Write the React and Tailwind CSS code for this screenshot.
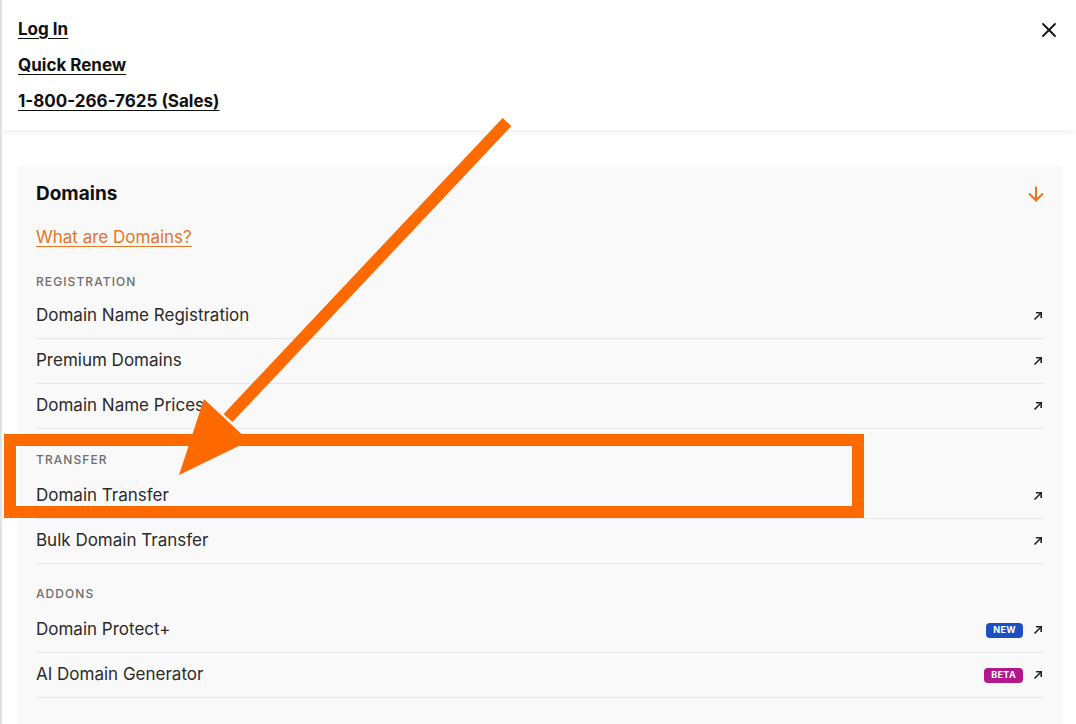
import { X, ArrowDown } from 'lucide-react'

const sections = [
    {
        label: 'REGISTRATION',
        gap: 'mt-[25px]',
        listGap: 'mt-[4px]',
        items: [
            { name: 'Domain Name Registration' },
            { name: 'Premium Domains' },
            { name: 'Domain Name Prices' },
        ],
    },
    {
        label: 'TRANSFER',
        gap: 'mt-[23px]',
        listGap: 'mt-[6px]',
        items: [
            { name: 'Domain Transfer' },
            { name: 'Bulk Domain Transfer' },
        ],
    },
    {
        label: 'ADDONS',
        gap: 'mt-[22px]',
        listGap: 'mt-[6px]',
        items: [
            { name: 'Domain Protect+', badge: 'NEW' },
            { name: 'AI Domain Generator', badge: 'BETA' },
        ],
    },
]

function ExternalArrow() {
    return (
        <svg width="10" height="10" viewBox="0 0 10 10" fill="none" stroke="#222" strokeWidth="1.6">
            <path d="M1.5 8.5 L8 2" />
            <path d="M3 1.8 H8.2 V7" />
        </svg>
    )
}

function Badge({ type }) {
    if (type === 'NEW') {
        return (
            <span className="px-[7px] h-[15px] flex items-center rounded-[4px] bg-[#1b4fc2] text-white text-[9px] font-bold tracking-[0.04em]">
                NEW
            </span>
        )
    }
    return (
        <span className="px-[7px] h-[15px] flex items-center rounded-[4px] bg-[#b3178c] text-white text-[9px] font-bold tracking-[0.04em]">
            BETA
        </span>
    )
}

export default function App() {
    return (
        <div className="relative h-[724px] w-full overflow-hidden bg-white border-l-2 border-[#e2e2e2] font-['Inter',sans-serif]">
            <header className="relative h-[130px] pl-[16px] pr-[18px] pt-[18px] shadow-[0_3px_6px_rgba(0,0,0,0.05)]">
                <nav className="flex flex-col gap-[14px]">
                    <a className="text-[17px] leading-[22px] font-bold text-[#111] underline underline-offset-[3px]">Log In</a>
                    <a className="text-[17px] leading-[22px] font-bold text-[#111] underline underline-offset-[3px]">Quick Renew</a>
                    <a className="text-[17px] leading-[22px] font-bold text-[#111] underline underline-offset-[3px]">1-800-266-7625 (Sales)</a>
                </nav>
                <button className="absolute right-[15px] top-[18px] text-[#111]">
                    <X size={24} strokeWidth={1.8} />
                </button>
            </header>

            <main className="pt-[35px] pl-[16px] pr-[14px]">
                <section className="bg-[#f9f9f9] px-[18px] pt-[17px] pb-[40px]">
                    <div className="flex items-center justify-between">
                        <h2 className="text-[19px] leading-[24px] font-bold text-[#111]">Domains</h2>
                        <ArrowDown size={22} strokeWidth={2.2} className="text-[#eb7320] mr-[-3px]" />
                    </div>
                    <a className="block mt-[19px] text-[17px] leading-[24px] text-[#e8741e] underline underline-offset-[3px]">What are Domains?</a>

                    {sections.map((sec) => (
                        <div key={sec.label} className={sec.gap}>
                            <p className="text-[12px] leading-[16px] font-medium tracking-[0.09em] text-[#6e6e6e]">{sec.label}</p>
                            <ul className={sec.listGap}>
                                {sec.items.map((item) => (
                                    <li key={item.name} className="h-[45px] flex items-center justify-between border-b border-[#e6e6e6]">
                                        <span className="text-[17px] text-[#2b2b2b]">{item.name}</span>
                                        <span className="flex items-center gap-[10px] pr-[1px]">
                                            {item.badge && <Badge type={item.badge} />}
                                            <ExternalArrow />
                                        </span>
                                    </li>
                                ))}
                            </ul>
                        </div>
                    ))}
                </section>
            </main>

            {/* annotation overlay */}
            <svg className="absolute inset-0 pointer-events-none" width="1076" height="724" viewBox="0 0 1076 724">
                <rect x="8" y="440" width="848" height="72" fill="none" stroke="#ff6a00" strokeWidth="12" />
                <line x1="505" y1="122" x2="226" y2="418" stroke="#ff6a00" strokeWidth="12" />
                <polygon points="202,399 247,441 177,475" fill="#ff6a00" />
            </svg>
        </div>
    )
}
